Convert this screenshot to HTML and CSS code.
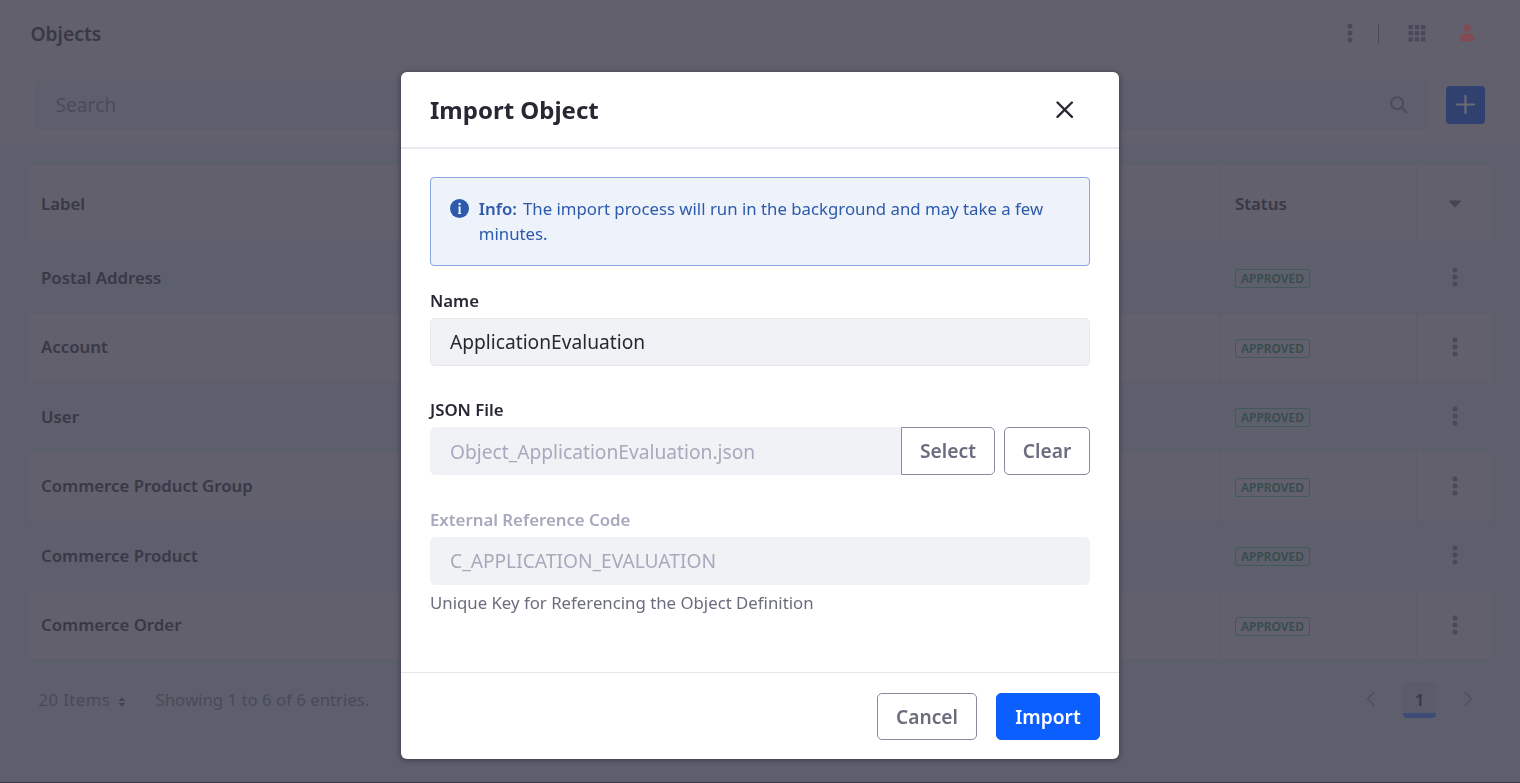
FILE: index.html
```html
<!DOCTYPE html>
<html lang="en">
<head>
<meta charset="utf-8">
<title>Objects</title>
<link rel="stylesheet" href="styles.css">
</head>
<body>
<svg class="sprite" width="0" height="0">
  <symbol id="dots" viewBox="0 0 20 20"><circle cx="10" cy="2.9" r="2.5"/><circle cx="10" cy="10" r="2.5"/><circle cx="10" cy="17.1" r="2.5"/></symbol>
</svg>
<div class="page">
  <header class="topbar">
    <h1 class="page-title">Objects</h1>
    <svg class="icon top-dots"><use href="#dots"/></svg>
    <span class="divider"></span>
    <svg class="icon top-grid" viewBox="0 0 18 18"><path d="M.5 1h4.400v4.200H.5zM6.800 1h4.400v4.200H6.800zM13 1h4.400v4.200H13zM.5 7h4.400v4.200H.5zM6.800 7h4.400v4.200H6.800zM13 7h4.400v4.200H13zM.5 13.200h4.400v4.200H.5zM6.800 13.200h4.400v4.200H6.800zM13 13.200h4.400v4.200H13z"/></svg>
    <span class="avatar"><svg width="16" height="18" viewBox="0 0 16 18"><circle cx="8" cy="4.200" r="3.600"/><path d="M8 9c4 0 7.300 2.100 7.300 5.200 0 1.800-1.200 3.200-3 3.200H3.700c-1.800 0-3-1.400-3-3.200C.7 11.100 4 9 8 9z"/></svg></span>
  </header>
  <div class="toolbar">
    <div class="search"><span>Search</span>
      <svg width="18" height="18" viewBox="0 0 18 18"><circle cx="7.200" cy="7.200" r="6" fill="none" stroke="currentColor" stroke-width="2"/><path d="M11.800 11.800L16.400 16.300" stroke="currentColor" stroke-width="2.300" stroke-linecap="round"/></svg>
    </div>
    <button class="add"><svg width="19" height="19" viewBox="0 0 19 19"><path d="M9.500 1v17M1 9.500h17" stroke="currentColor" stroke-width="2.200" stroke-linecap="round"/></svg></button>
  </div>
  <main class="content">
    <div class="table">
      <div class="row head"><div>Label</div><div>Status</div><div><svg class="caret" width="12" height="8" viewBox="0 0 12 8"><path d="M.8.500h10.400c.7 0 .9.700.5 1.200L6.700 7a1 1 0 0 1-1.400 0L.3 1.700C-.1 1.200.1.500.8.500z"/></svg></div></div>
      <div class="row odd"><div>Postal Address</div><div><span class="badge">APPROVED</span></div><div><svg class="icon"><use href="#dots"/></svg></div></div>
      <div class="row"><div>Account</div><div><span class="badge">APPROVED</span></div><div><svg class="icon"><use href="#dots"/></svg></div></div>
      <div class="row odd"><div>User</div><div><span class="badge">APPROVED</span></div><div><svg class="icon"><use href="#dots"/></svg></div></div>
      <div class="row"><div>Commerce Product Group</div><div><span class="badge">APPROVED</span></div><div><svg class="icon"><use href="#dots"/></svg></div></div>
      <div class="row odd"><div>Commerce Product</div><div><span class="badge">APPROVED</span></div><div><svg class="icon"><use href="#dots"/></svg></div></div>
      <div class="row"><div>Commerce Order</div><div><span class="badge">APPROVED</span></div><div><svg class="icon"><use href="#dots"/></svg></div></div>
    </div>
    <div class="pagination">
      <span class="per-page">20 Items</span>
      <svg class="sort" width="8" height="10" viewBox="0 0 8 10"><path d="M.7 4L4 .2 7.300 4zM.7 6L4 9.800 7.300 6z"/></svg>
      <span class="showing">Showing 1 to 6 of 6 entries.</span>
      <svg class="chev" width="10" height="18" viewBox="0 0 10 18"><path d="M8.500 2L1.500 9l7 7"/></svg>
      <span class="current">1</span>
      <svg class="chev" width="10" height="18" viewBox="0 0 10 18"><path d="M1.500 2l7 7-7 7"/></svg>
    </div>
  </main>
</div>
<div class="overlay">
  <section class="modal" role="dialog">
    <div class="modal-head">
      <h2>Import Object</h2>
      <svg width="18" height="18" viewBox="0 0 18 18"><path d="M1.500 1.500l14.400 14.400M15.900 1.500L1.500 15.900" stroke="currentColor" stroke-width="2.300" stroke-linecap="round"/></svg>
    </div>
    <div class="modal-body">
      <div class="alert">
        <svg width="19" height="19" viewBox="0 0 19 19"><circle cx="9.500" cy="9.500" r="9.500" fill="#2e5aac"/><circle cx="9.600" cy="5" r="1.200" fill="#edf2fb"/><path d="M8.300 7.400h2.300v6.600h.6v.9H8v-.9h.6V8.400h-.3z" fill="#edf2fb"/></svg>
        <p><strong>Info:</strong>The import process will run in the background and may take a few minutes.</p>
      </div>
      <label class="label name-label">Name</label>
      <div class="input editable">ApplicationEvaluation</div>
      <label class="label json-label">JSON File</label>
      <div class="file">
        <div class="input">Object_ApplicationEvaluation.json</div>
        <button class="btn select">Select</button>
        <button class="btn clear">Clear</button>
      </div>
      <label class="label erc-label">External Reference Code</label>
      <div class="input">C_APPLICATION_EVALUATION</div>
      <p class="help">Unique Key for Referencing the Object Definition</p>
    </div>
    <div class="modal-foot">
      <button class="btn cancel">Cancel</button>
      <button class="btn primary">Import</button>
    </div>
  </section>
</div>
</body>
</html>
```
FILE: styles.css
```css
* { box-sizing: border-box; }
body {
  margin: 0;
  height: 783px;
  overflow: hidden;
  font-family: "Noto Sans", sans-serif;
  font-size: 19.2px;
  line-height: 1.5;
  color: #393847;
  background: #5e5f6c;
}
h1, h2, p { margin: 0; }
button { font: inherit; margin: 0; padding: 0; }
svg { display: block; flex: none; }
.sprite { position: absolute; }
.page { height: 783px; border-bottom: 1px solid #393847; }
.icon { width: 20px; height: 20px; fill: #4a4959; }

.topbar {
  height: 67px;
  display: flex;
  align-items: center;
  padding: 0 33px 0 30.5px;
  background: #61606c;
  border-bottom: 1px solid #5f5e6b;
}
.page-title { flex: 1; font-size: 19.2px; font-weight: 600; padding-top: 2px; }
.top-dots { margin-right: 18.5px; }
.divider { width: 1px; height: 19px; background: #4a4959; margin-right: 29px; }
.top-grid { width: 18px; height: 18px; margin-right: 21px; }
.avatar {
  width: 40px;
  height: 40px;
  border: 1px solid #5f5e6b;
  border-radius: 50%;
  display: flex;
  align-items: center;
  justify-content: center;
  fill: #824b54;
}

.toolbar {
  height: 78px;
  display: flex;
  align-items: center;
  padding: 0 35px 2px;
  background: #61606c;
  border-bottom: 1px solid #5c5d6a;
}
.search {
  flex: 1;
  height: 48px;
  display: flex;
  align-items: center;
  justify-content: space-between;
  padding: 0 18.5px 0 19.500px;
  background: #5e5f6c;
  border: 1px solid #5c5d6b;
  border-radius: 5px;
  color: #4a4b5a;
}
.search span { padding-top: 1px; }
.add {
  width: 39px;
  height: 38px;
  margin-left: 19px;
  display: flex;
  align-items: center;
  justify-content: center;
  background: #31416f;
  border: 0;
  border-radius: 4px;
  color: #6b6b76;
}

.content { padding: 19px 27px 0; }
.table {
  height: 496px;
  display: grid;
  grid-template-rows: 78px repeat(5, 69.5px) 1fr;
  border: 1px solid #5d5d6a;
  border-radius: 5px;
  overflow: hidden;
  background: #61606c;
}
.row {
  display: grid;
  grid-template-columns: 1191px 197px 1fr;
  font-size: 16.8px;
  font-weight: 600;
  border-bottom: 1px solid #5c5c6a;
}
.row:last-child { border-bottom: 0; }
.row.odd { background: #5e5f6c; }
.row > div { display: flex; align-items: center; padding-left: 13px; }
.row > div + div { border-left: 1px solid #5c5c6a; padding-left: 15px; }
.row > div:last-child { padding-left: 1px; justify-content: center; }
.row:not(.head) > div:first-child { padding-top: .4px; }
.row:not(.head) > div:last-child { padding-top: .4px; }
.caret { fill: #464555; }
.badge {
  height: 19px;
  padding: 0 5px;
  border: 1px solid #415a58;
  border-radius: 3px;
  color: #364c4d;
  font-size: 12px;
  line-height: 17px;
  margin-top: 2.6px;
}
.pagination {
  display: flex;
  align-items: center;
  height: 80px;
  padding: 0 20px 0 11.500px;
  font-size: 16.8px;
  color: #494a59;
}
.per-page { width: 79px; letter-spacing: .4px; white-space: nowrap; }
.sort { fill: #41414f; margin-right: 30px; margin-top: 3px; }
.showing { flex: 1; }
.chev { fill: none; stroke: #505160; stroke-width: 1.700; margin-top: -2px; }
.current {
  width: 33px;
  height: 36px;
  margin: 0 27px;
  text-align: center;
  line-height: 35px;
  font-weight: 600;
  color: #393847;
  background: #5b5c6b;
  border-bottom: 5px solid #3e4a78;
  border-radius: 4px;
}

.overlay {
  position: fixed;
  inset: 0;
  display: flex;
  justify-content: center;
  align-items: flex-start;
  padding-top: 72px;
}
.modal {
  width: 718px;
  height: 687px;
  display: flex;
  flex-direction: column;
  background: #fff;
  border-radius: 6px;
  box-shadow: 0 1px 5px 1px rgba(39, 40, 51, .5);
  color: #272833;
}
.modal-head {
  height: 77px;
  display: flex;
  align-items: center;
  justify-content: space-between;
  padding: 0 45.5px 0 29px;
  border-bottom: 2px solid #e9e9ef;
}
.modal-head h2 { font-size: 24px; font-weight: 700; }
.modal-body { flex: 1; padding: 28px 29px 0; }
.alert {
  height: 89px;
  display: flex;
  gap: 9.8px;
  padding: 18px 30px 0 19px;
  background: #edf2fb;
  border: 1px solid #89a7e0;
  border-radius: 4px;
  color: #2e5aac;
  font-size: 16.8px;
  line-height: 25px;
}
.alert svg { margin-top: 3px; }
.alert strong { font-weight: 600; margin-right: 6px; }
.label { display: block; height: 25px; line-height: 25px; font-size: 16.8px; font-weight: 600; }
.name-label { margin: 22px 0 5px; }
.json-label { margin: 31px 0 5px; }
.erc-label { margin: 32px 0 5px; color: #a7a9bc; }
.input {
  height: 48px;
  padding-left: 19px;
  line-height: 46px;
  background: #f1f2f5;
  border: 1px solid #f1f2f5;
  border-radius: 5px;
  color: #a7a9bc;
}
.input.editable { border-color: #e7e7ed; color: #272833; }
.file { display: flex; }
.file .input { flex: 1; border-radius: 5px 0 0 5px; line-height: 48px; }
.btn {
  height: 48px;
  border: 1px solid #8a8a9e;
  border-radius: 5px;
  background: #fff;
  color: #6b6c7e;
  font-weight: 600;
  line-height: 46px;
}
.select { width: 94px; border-radius: 0 5px 5px 0; }
.clear { width: 86px; margin-left: 9px; }
.help { margin-top: 5px; font-size: 16.8px; line-height: 25px; color: #6b6c7e; }
.modal-foot {
  height: 87px;
  display: flex;
  justify-content: flex-end;
  gap: 19px;
  padding: 20px 19px 0;
  border-top: 1px solid #e7e7ed;
}
.modal-foot .btn { height: 47px; }
.cancel { width: 100px; }
.modal-foot .primary { width: 104px; background: #0b5fff; border-color: #0b5fff; color: #fff; }
```
